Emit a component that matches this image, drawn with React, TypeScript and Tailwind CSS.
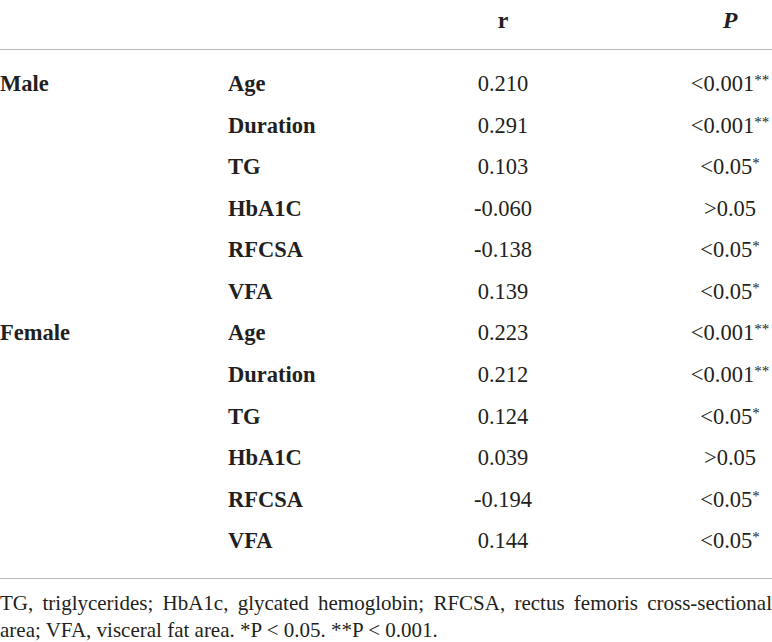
import React from 'react';

type Row = { group?: string; label: string; r: string; p: string };

const rows: Row[] = [
  { group: 'Male', label: 'Age', r: '0.210', p: '<0.001**' },
  { label: 'Duration', r: '0.291', p: '<0.001**' },
  { label: 'TG', r: '0.103', p: '<0.05*' },
  { label: 'HbA1C', r: '-0.060', p: '>0.05' },
  { label: 'RFCSA', r: '-0.138', p: '<0.05*' },
  { label: 'VFA', r: '0.139', p: '<0.05*' },
  { group: 'Female', label: 'Age', r: '0.223', p: '<0.001**' },
  { label: 'Duration', r: '0.212', p: '<0.001**' },
  { label: 'TG', r: '0.124', p: '<0.05*' },
  { label: 'HbA1C', r: '0.039', p: '>0.05' },
  { label: 'RFCSA', r: '-0.194', p: '<0.05*' },
  { label: 'VFA', r: '0.144', p: '<0.05*' },
];

// split "<0.001**" into value + raised stars
function PValue({ text }: { text: string }) {
  const m = text.match(/^(.*?)(\*+)$/);
  if (!m) return <span>{text}</span>;
  return (
    <span>
      {m[1]}
      <span className="relative -top-[6px] text-[15px]">{m[2]}</span>
    </span>
  );
}

const grid = 'grid grid-cols-[228px_200px_150px_1fr_84px] items-center';

export default function App() {
  return (
    <div
      className="w-[772px] h-[642px] bg-white text-[#231f20] overflow-hidden"
      style={{ fontFamily: '"Liberation Serif", "Times New Roman", serif' }}
    >
      {/* header */}
      <div className={`${grid} h-[50px] border-b border-[#b8b8b8] text-[24px] font-bold pb-[10px]`}>
        <div />
        <div />
        <div className="text-center">r</div>
        <div />
        <div className="text-center italic">P</div>
      </div>

      {/* body */}
      <div className="pt-[13px] pb-[16px] border-b border-[#b8b8b8]">
        {rows.map((row, i) => (
          <div key={i} className={`${grid} h-[41.6px] text-[22.5px]`}>
            <div className="font-bold">{row.group ?? ''}</div>
            <div className="font-bold">{row.label}</div>
            <div className="text-center">{row.r}</div>
            <div />
            <div className="text-center whitespace-nowrap">
              <PValue text={row.p} />
            </div>
          </div>
        ))}
      </div>

      {/* footnote */}
      <p className="pt-[11px] text-[21px] leading-[27px] text-justify">
        TG, triglycerides; HbA1c, glycated hemoglobin; RFCSA, rectus femoris cross-sectional area; VFA,
        visceral fat area. *P &lt; 0.05. **P &lt; 0.001.
      </p>
    </div>
  );
}
